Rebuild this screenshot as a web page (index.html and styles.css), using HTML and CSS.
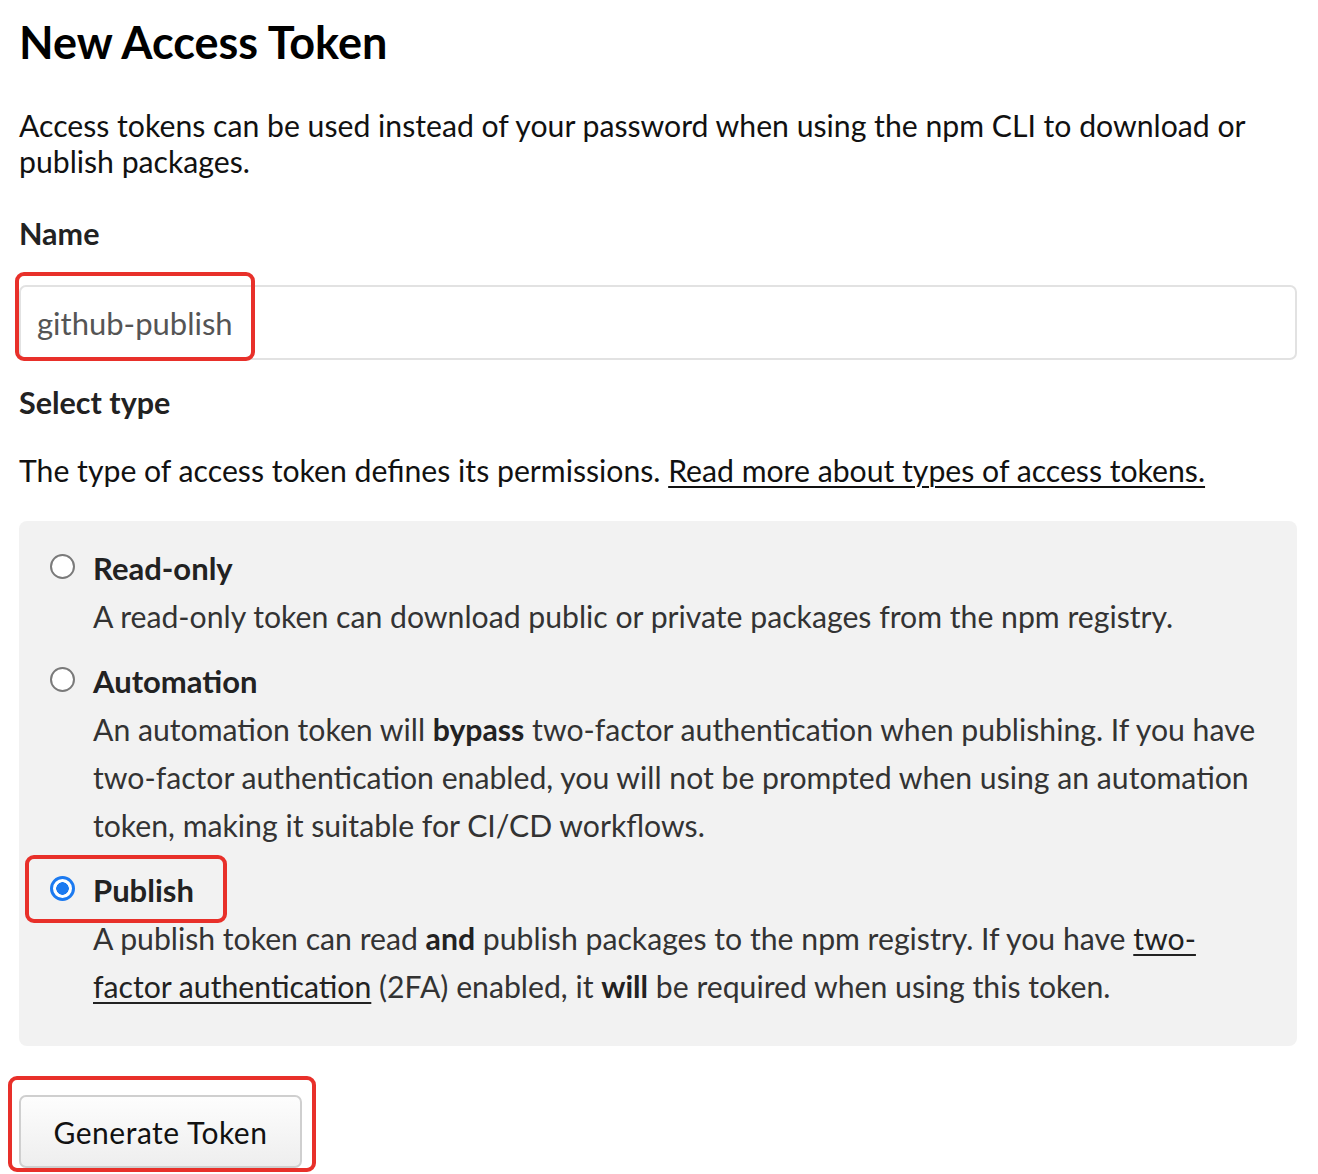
FILE: index.html
```html
<!DOCTYPE html>
<html lang="en">
<head>
<meta charset="utf-8">
<title>New Access Token</title>
<link rel="stylesheet" href="styles.css">
</head>
<body>
<main class="page">
  <h1 class="title">New Access Token</h1>
  <p class="intro">Access tokens can be used instead of your password when using the npm CLI to download or publish packages.</p>

  <label class="field-label" for="token-name">Name</label>
  <div class="input-wrap">
    <input id="token-name" class="text-input" type="text" value="github-publish">
    <span class="mark mark-input"></span>
  </div>

  <h2 class="field-label section">Select type</h2>
  <p class="type-desc">The type of access token defines its permissions. <a href="#" class="link">Read more about types of access tokens.</a></p>

  <div class="type-box">
    <div class="option">
      <label class="option-head">
        <input type="radio" name="type" class="radio">
        <span class="option-title">Read-only</span>
      </label>
      <p class="option-desc">A read-only token can download public or private packages from the npm registry.</p>
    </div>
    <div class="option">
      <label class="option-head">
        <input type="radio" name="type" class="radio">
        <span class="option-title">Automation</span>
      </label>
      <p class="option-desc">An automation token will <b>bypass</b> two-factor authentication when publishing. If you have two-factor authentication enabled, you will not be prompted when using an automation token, making it suitable for CI/CD workflows.</p>
    </div>
    <div class="option">
      <label class="option-head">
        <input type="radio" name="type" class="radio" checked>
        <span class="option-title">Publish</span>
        <span class="mark mark-publish"></span>
      </label>
      <p class="option-desc">A publish token can read <b>and</b> publish packages to the npm registry. If you have <a href="#" class="link">two-factor authentication</a> (2FA) enabled, it <b>will</b> be required when using this token.</p>
    </div>
  </div>

  <div class="actions">
    <button class="btn" type="button">Generate Token</button>
    <span class="mark mark-button"></span>
  </div>
</main>
</body>
</html>
```
FILE: styles.css
```css
html, body {
  margin: 0;
  padding: 0;
  background: #fff;
}

body {
  font-family: "Lato", "Liberation Sans", sans-serif;
  color: #111;
  overflow: hidden;
}

.page {
  padding: 14px 21px 12px 19px;
}

.title {
  margin: 0;
  font-size: 45px;
  line-height: 56px;
  font-weight: 700;
  color: #000;
}

.intro {
  margin: 37px 0 0;
  font-size: 30.2px;
  line-height: 36px;
  color: #111;
}

.field-label {
  display: block;
  margin: 36px 0 0;
  font-size: 30.5px;
  line-height: 37px;
  font-weight: 700;
  color: #222;
}

.field-label.section {
  margin-top: 24px;
}

.input-wrap {
  position: relative;
  margin-top: 33px;
}

.text-input {
  display: block;
  box-sizing: border-box;
  width: 100%;
  height: 75px;
  padding: 0 16px;
  border: 2px solid #e2e2e2;
  border-radius: 7px;
  font-family: inherit;
  font-size: 31px;
  color: #555;
  background: #fff;
  outline: none;
}

.type-desc {
  margin: 31px 0 0;
  font-size: 30.2px;
  line-height: 37px;
  color: #111;
}

.link {
  color: #111;
  text-decoration: underline;
  text-underline-offset: 4px;
  text-decoration-thickness: 2px;
}

.type-box {
  margin-top: 32px;
  background: #f2f2f2;
  border-radius: 8px;
  padding: 23px 26px 19px 31px;
}

.option {
  margin-bottom: 17px;
}

.option-head {
  position: relative;
  display: flex;
  align-items: center;
  gap: 18px;
  height: 48px;
}

.radio {
  appearance: none;
  -webkit-appearance: none;
  flex: none;
  box-sizing: border-box;
  width: 25px;
  height: 25px;
  margin: 0 0 4px;
  border: 2px solid #7a7a7a;
  border-radius: 50%;
  background: #fff;
}

.radio:checked {
  border: 3px solid #1c7af0;
  background: radial-gradient(circle, #1c7af0 0 6px, #fff 6.5px);
}

.option-title {
  font-size: 31px;
  font-weight: 700;
  color: #222;
}

.option-desc {
  margin: 0;
  padding-left: 43px;
  font-size: 30.2px;
  line-height: 48px;
  color: #333;
}

.option-desc b {
  color: #222;
}

.option-desc .link {
  color: #222;
}

.actions {
  position: relative;
  margin-top: 49px;
}

.btn {
  display: block;
  box-sizing: border-box;
  width: 283px;
  height: 73px;
  padding: 0;
  border: 2px solid #cfcfcf;
  border-radius: 7px;
  background: linear-gradient(#fdfdfd, #eeeeee);
  font-family: inherit;
  font-size: 30px;
  color: #111;
  letter-spacing: 0.5px;
}

.mark {
  position: absolute;
  box-sizing: border-box;
  border: 4px solid #e8302a;
  border-radius: 9px;
  pointer-events: none;
}

.mark-input {
  left: -4px;
  top: -13px;
  width: 240px;
  height: 89px;
}

.mark-publish {
  left: -25px;
  top: -11px;
  width: 202px;
  height: 68px;
}

.mark-button {
  left: -11px;
  top: -19px;
  width: 308px;
  height: 96px;
}
```
